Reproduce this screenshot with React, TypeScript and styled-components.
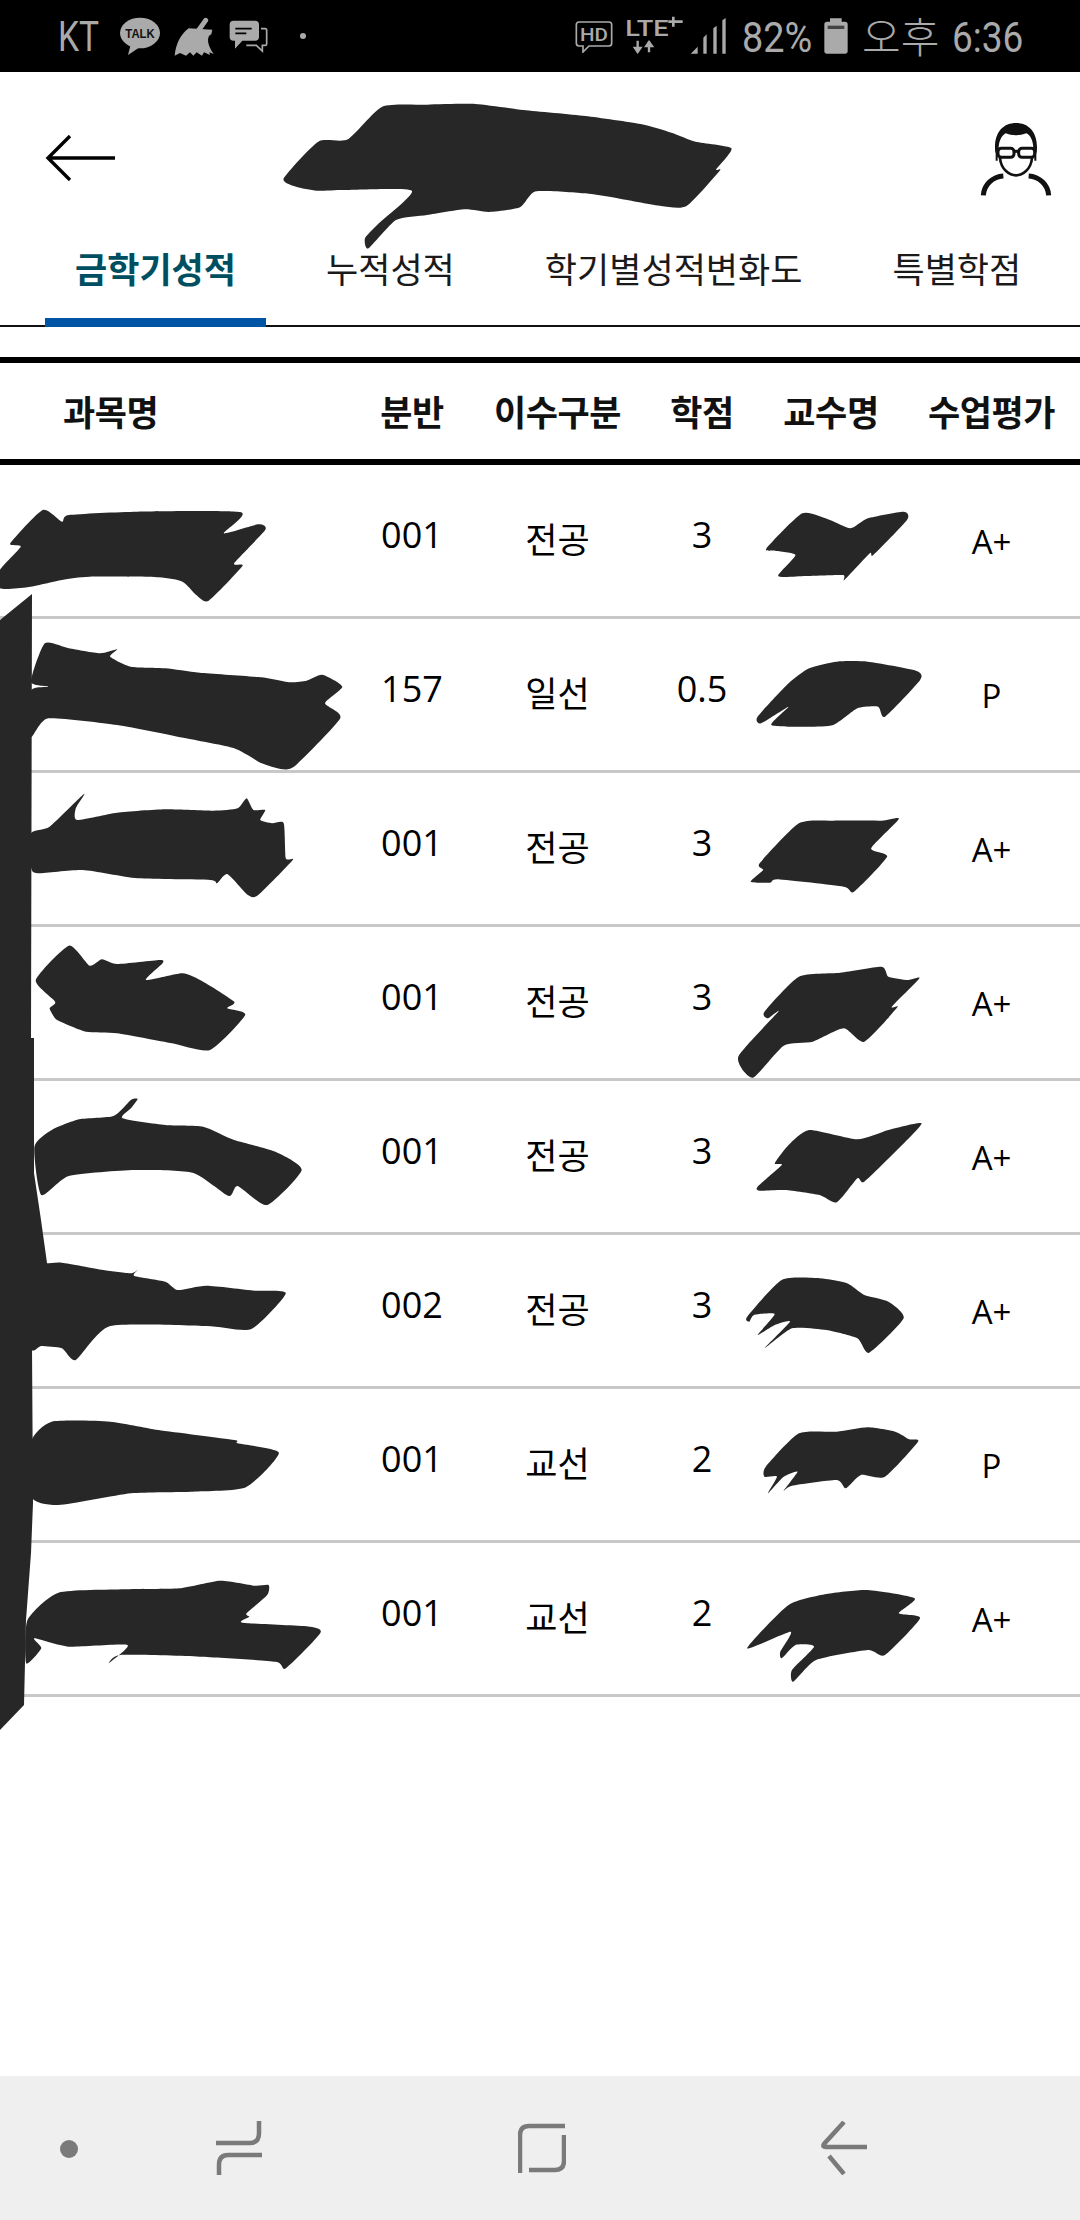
import React from "react";
import styled, { createGlobalStyle } from "styled-components";

const Global = createGlobalStyle`
  html, body { margin: 0; padding: 0; background: #fff; }
  body { font-family: "Open Sans", "Noto Sans CJK KR", sans-serif; }
`;

const Page = styled.div`
  position: relative;
  width: 1080px;
  height: 2220px;
  display: flex;
  flex-direction: column;
  overflow: hidden;
  background: #fff;
`;

const StatusBar = styled.div`
  height: 72px;
  flex: none;
  background: #000;
  display: flex;
  align-items: center;
  padding: 0 55px 0 58px;
  color: #aaa;
`;
const StatusGroup = styled.div<{ $right?: boolean }>`
  display: flex;
  align-items: center;
  margin-left: ${(p) => (p.$right ? "auto" : "0")};
`;
const StatusSlot = styled.div<{ $w: number; $ml?: number }>`
  width: ${(p) => p.$w}px;
  margin-left: ${(p) => p.$ml ?? 0}px;
  flex: none;
  display: flex;
  align-items: center;
  height: 72px;
  overflow: visible;
  & > svg { display: block; flex: none; }
`;
const StatusText = styled.span<{ $sx: number; $size: number; $dy?: number }>`
  display: inline-block;
  white-space: nowrap;
  font-family: Roboto, "Noto Sans CJK KR", sans-serif;
  font-weight: 400;
  font-size: ${(p) => p.$size}px;
  line-height: 72px;
  transform-origin: left center;
  transform: translateY(${(p) => p.$dy ?? 0}px) scaleX(${(p) => p.$sx});
`;
const StatusKo = styled(StatusText)`
  font-family: "Noto Sans CJK KR", sans-serif;
  font-weight: 300;
`;

const TitleBar = styled.div`
  height: 146px;
  flex: none;
  display: flex;
  align-items: flex-start;
  justify-content: space-between;
  padding: 50px 28px 0 45px;
  box-sizing: border-box;
`;
const BackSlot = styled.div`
  padding-top: 13px;
`;

const TabBar = styled.div`
  height: 109px;
  flex: none;
  box-sizing: border-box;
  display: flex;
  padding-left: 45px;
  gap: 30px;
  border-bottom: 2px solid #111;
`;
const Tab = styled.div<{ $active?: boolean }>`
  position: relative;
  padding: 0 30px;
  height: 107px;
  line-height: 99px;
  box-sizing: border-box;
  white-space: nowrap;
  font-family: "Noto Sans CJK KR", sans-serif;
  font-size: 35px;
  font-weight: ${(p) => (p.$active ? 700 : 400)};
  color: ${(p) => (p.$active ? "#004f60" : "#1a1a1a")};
  &::after {
    content: "";
    display: ${(p) => (p.$active ? "block" : "none")};
    position: absolute;
    left: 0;
    right: 0;
    bottom: -2px;
    height: 9px;
    background: #0054a6;
  }
`;

const Table = styled.div`
  margin-top: 30px;
  flex: none;
`;
const cols = "352px 120px 171px 118px 140px 181px";
const HeadRow = styled.div`
  display: grid;
  grid-template-columns: ${cols};
  height: 108px;
  box-sizing: border-box;
  border-top: 6px solid #000;
  border-bottom: 6px solid #000;
  align-items: center;
`;
const HeadCell = styled.div<{ $first?: boolean }>`
  font-family: "Noto Sans CJK KR", sans-serif;
  font-weight: 700;
  font-size: 35px;
  letter-spacing: -0.4px;
  color: #111;
  white-space: nowrap;
  text-align: ${(p) => (p.$first ? "left" : "center")};
  padding-left: ${(p) => (p.$first ? "63px" : "0")};
  padding-bottom: 2px;
`;
const BodyRow = styled.div`
  display: grid;
  grid-template-columns: ${cols};
  height: 154px;
  box-sizing: border-box;
  border-bottom: 3px solid #c8c8c8;
  align-items: center;
`;
const Cell = styled.div<{ $up?: number; $down?: number }>`
  font-family: "Open Sans", "Noto Sans CJK KR", sans-serif;
  font-size: 36px;
  color: #000;
  text-align: center;
  white-space: nowrap;
  padding-bottom: ${(p) => p.$up ?? 0}px;
  padding-top: ${(p) => p.$down ?? 0}px;
`;
const KoCell = styled(Cell)`
  font-family: "Noto Sans CJK KR", sans-serif;
  font-size: 35px;
`;
const GradeCell = styled(Cell)`
  font-size: 33px;
`;

const Spacer = styled.div`
  flex: 1;
`;

const NavBar = styled.div`
  height: 144px;
  flex: none;
  background: #efefef;
  display: flex;
  align-items: center;
  padding-left: 60px;
`;
const NavDot = styled.div`
  width: 18px;
  height: 18px;
  border-radius: 50%;
  background: #7a7a7a;
  margin-top: 2px;
`;
const NavIcon = styled.svg<{ $ml: number }>`
  display: block;
  margin-left: ${(p) => p.$ml}px;
  fill: none;
  stroke: #7a7a7a;
  stroke-width: 4.5;
`;

const Redactions = styled.svg`
  position: absolute;
  left: 0;
  top: 0;
  pointer-events: none;
`;

type P = number[];
const sx = 1.452;
const toPath = (base: number, pts: P[]) => {
  const q = pts.map(([x, y]) => [x / sx, base + y / 3]);
  const n = q.length;
  const t = 0.1;
  let d = `M${q[0][0].toFixed(1)} ${q[0][1].toFixed(1)}`;
  for (let i = 0; i < n; i++) {
    const p0 = q[(i - 1 + n) % n];
    const p1 = q[i];
    const p2 = q[(i + 1) % n];
    const p3 = q[(i + 2) % n];
    const c1x = p1[0] + (p2[0] - p0[0]) * t;
    const c1y = p1[1] + (p2[1] - p0[1]) * t;
    const c2x = p2[0] - (p3[0] - p1[0]) * t;
    const c2y = p2[1] - (p3[1] - p1[1]) * t;
    d += `C${c1x.toFixed(1)} ${c1y.toFixed(1)} ${c2x.toFixed(1)} ${c2y.toFixed(1)} ${p2[0].toFixed(1)} ${p2[1].toFixed(1)}`;
  }
  return d + "Z";
};

const marks: [number, P[]][] = [
  [0, [[555,320],[620,314],[690,312],[760,330],[850,348],[930,372],[975,398],[1010,425],[1062,445],[1040,508],[1045,512],[997,618],[960,618],[900,596],[850,580],[778,574],[755,622],[710,636],[675,628],[620,645],[575,660],[535,745],[530,715],[550,670],[598,572],[500,570],[460,572],[430,560],[412,535],[462,425],[505,418]]],
  [340, [[0,690],[30,620],[15,610],[62,510],[90,545],[100,525],[200,515],[350,517],[325,580],[375,553],[385,570],[340,670],[352,678],[303,782],[285,765],[265,725],[230,712],[130,710],[90,720],[40,742],[0,745]]],
  [340, [[1165,520],[1205,540],[1235,565],[1260,535],[1312,515],[1317,540],[1268,645],[1263,640],[1226,720],[1224,705],[1170,708],[1130,708],[1155,645],[1125,632],[1113,625]]],
  [340, [[65,910],[100,925],[145,940],[170,928],[160,950],[190,980],[240,985],[290,998],[380,1012],[420,1027],[445,1022],[468,1004],[497,1040],[472,1090],[494,1135],[430,1275],[410,1288],[380,1270],[340,1225],[270,1195],[170,1155],[70,1135],[45,1190],[45,1052],[70,1040],[45,1025]]],
  [340, [[1175,985],[1215,965],[1260,965],[1330,992],[1336,1020],[1285,1130],[1275,1100],[1245,1105],[1210,1155],[1170,1160],[1120,1155],[1145,1100],[1105,1150],[1100,1130],[1145,1030]]],
  [780, [[122,42],[110,85],[112,120],[170,98],[240,88],[310,92],[345,85],[358,55],[368,90],[385,90],[378,120],[395,130],[412,130],[415,235],[425,240],[375,345],[360,345],[330,282],[315,310],[305,300],[200,295],[120,270],[55,280],[45,262],[45,160],[72,140]]],
  [780, [[1160,130],[1210,122],[1280,122],[1305,117],[1265,205],[1288,230],[1240,335],[1225,320],[1130,298],[1118,308],[1090,305],[1108,270],[1103,250]]],
  [780, [[100,497],[130,557],[148,538],[170,552],[232,540],[236,550],[212,600],[265,580],[295,605],[340,665],[330,685],[356,705],[305,810],[250,790],[170,760],[125,755],[88,725],[80,715],[72,685],[80,665],[52,600]]],
  [780, [[1160,590],[1220,578],[1280,560],[1290,590],[1318,600],[1335,595],[1295,680],[1303,682],[1255,785],[1225,745],[1180,785],[1138,797],[1093,893],[1072,830],[1130,695],[1115,715],[1110,695]]],
  [780, [[200,957],[190,985],[178,1015],[240,1035],[295,1040],[340,1080],[400,1115],[438,1170],[388,1275],[345,1218],[332,1248],[280,1178],[195,1170],[100,1188],[60,1245],[50,1100],[75,1050],[115,1018],[165,1008],[190,960]]],
  [780, [[1175,1050],[1245,1078],[1290,1050],[1338,1030],[1305,1105],[1255,1205],[1245,1195],[1215,1267],[1190,1245],[1140,1230],[1103,1232],[1100,1220],[1135,1155],[1125,1150],[1145,1095]]],
  [1220, [[68,130],[90,128],[150,150],[190,160],[200,150],[195,168],[240,185],[258,210],[300,197],[370,212],[415,220],[365,327],[300,318],[160,318],[110,420],[90,385],[60,378],[45,382],[45,130]]],
  [1220, [[1135,180],[1190,175],[1230,190],[1255,225],[1290,245],[1312,295],[1262,398],[1245,355],[1200,330],[1150,325],[1110,385],[1147,305],[1125,315],[1100,345],[1125,282],[1095,285],[1088,305],[1085,290]]],
  [1220, [[75,605],[160,605],[230,630],[340,660],[345,670],[405,698],[357,802],[280,815],[190,820],[85,855],[45,830],[45,665]]],
  [1220, [[1160,640],[1215,635],[1260,622],[1300,635],[1320,658],[1333,665],[1285,770],[1250,765],[1228,805],[1215,780],[1150,797],[1138,812],[1158,755],[1138,770],[1115,820],[1128,770],[1110,770],[1112,740]]],
  [1220, [[85,1118],[180,1108],[260,1105],[320,1082],[370,1097],[390,1095],[388,1125],[358,1180],[362,1190],[352,1208],[450,1220],[465,1240],[415,1345],[400,1325],[290,1310],[175,1305],[158,1330],[185,1275],[100,1280],[50,1255],[60,1285],[38,1330],[40,1200]]],
  [1220, [[1145,1155],[1200,1122],[1260,1110],[1328,1135],[1305,1180],[1336,1195],[1285,1305],[1260,1290],[1185,1320],[1152,1385],[1150,1350],[1182,1280],[1155,1275],[1135,1315],[1133,1295],[1148,1235],[1085,1285]]],
];
const sideBar = "32,594 31,1038 34,1038 34,1173 41,1220 47,1263 32,1347 33,1503 31,1553 26,1620 24,1705 0,1730 0,620";

const rows = [
  ["001", "전공", "3", "A+"],
  ["157", "일선", "0.5", "P"],
  ["001", "전공", "3", "A+"],
  ["001", "전공", "3", "A+"],
  ["001", "전공", "3", "A+"],
  ["002", "전공", "3", "A+"],
  ["001", "교선", "2", "P"],
  ["001", "교선", "2", "A+"],
];

const gray = "#aaa";

const Talk = () => (
  <svg width="40" height="38" viewBox="360 52 120 114">
    <ellipse cx="420" cy="100" rx="60" ry="46" fill={gray} />
    <path d="M392 135 L384 166 L420 142 Z" fill={gray} />
    <text x="420" y="115" textAnchor="middle" fontFamily="Liberation Sans, sans-serif" fontWeight="700" fontSize="36" fill="#111" textLength="88" lengthAdjust="spacingAndGlyphs">TALK</text>
  </svg>
);
const Broom = () => (
  <svg width="40" height="39" viewBox="522 54 120 117">
    <path d="M617 64 L595 95" stroke={gray} strokeWidth="15" strokeLinecap="round" />
    <path d="M566 88 L637 92 L634 106 C618 112 622 140 641 165 L628 160 L630 168 L612 160 L606 170 L590 160 L580 170 L570 160 L558 170 L540 162 L524 170 C528 135 540 108 566 88 Z" fill={gray} />
  </svg>
);
const Chat = () => (
  <svg width="39" height="33" viewBox="686 62 117 99">
    <path d="M700 64 H764 Q776 64 776 76 V112 Q776 124 764 124 H726 L704 148 V124 H700 Q688 124 688 112 V76 Q688 64 700 64 Z" fill={gray} />
    <path d="M705 88 H754 M705 102 H738" stroke="#000" strokeWidth="5" />
    <path d="M782 88 H794 Q799 88 799 93 V133 Q799 138 794 138 H786 V155 L768 138 H738" stroke={gray} strokeWidth="5" fill="none" />
  </svg>
);
const HdIcon = () => (
  <svg width="38" height="33" viewBox="46 64 114 99">
    <path d="M58 70 H148 Q156 70 156 78 V134 Q156 142 148 142 H88 L70 160 V142 H58 Q50 142 50 134 V78 Q50 70 58 70 Z" fill="none" stroke={gray} strokeWidth="5" />
    <text x="103" y="126" textAnchor="middle" fontFamily="Roboto, sans-serif" fontWeight="500" fontSize="56" fill={gray} textLength="84" lengthAdjust="spacingAndGlyphs">HD</text>
  </svg>
);
const LteIcon = () => (
  <svg width="60" height="40" viewBox="195 56 180 120">
    <text x="196" y="116" fontFamily="Roboto, sans-serif" fontWeight="500" fontSize="66" fill={gray} textLength="130" lengthAdjust="spacingAndGlyphs">LTE</text>
    <path d="M340 58 V88 M325 73 H368" stroke={gray} strokeWidth="8" />
    <path d="M233 130 V165 M267 165 V132" stroke={gray} strokeWidth="7" />
    <path d="M218 148 H248 L233 170 Z M252 150 L267 128 L283 150 Z" fill={gray} />
  </svg>
);
const SignalIcon = () => (
  <svg width="37" height="37" viewBox="390 53 111 111">
    <path d="M392 160 L413 139 V160 Z M430 112 L440 102 V160 H430 Z M460 84 L470 76 V160 H460 Z M487 60 L497 53 V160 H487 Z" fill={gray} />
  </svg>
);
const BatteryIcon = () => (
  <svg width="24" height="36" viewBox="792 57 72 108">
    <path d="M810 58 H845 V68 H855 Q863 68 863 76 V156 Q863 164 855 164 H801 Q793 164 793 156 V76 Q793 68 801 68 H810 Z" fill={gray} />
    <rect x="803" y="80" width="50" height="10" fill="#444" />
  </svg>
);
const StatusDot = () => (
  <svg width="8" height="8" viewBox="0 0 8 8"><circle cx="4" cy="4" r="3" fill={gray} /></svg>
);

const BackArrow = () => (
  <svg width="70" height="46" viewBox="0 0 70 46">
    <path d="M70 23 H3 M25 1 L3 23 L25 45" fill="none" stroke="#000" strokeWidth="3.4" />
  </svg>
);
const Person = () => (
  <svg width="72" height="74" viewBox="88 62 214 222">
    <path d="M133 155 C126 95 155 65 195 65 C235 65 264 95 257 155 L247 142 C247 120 238 100 226 96 C206 104 182 104 164 96 C152 102 143 120 143 142 Z" fill="#111" />
    <path d="M147 170 C150 205 176 222 195 222 C214 222 240 205 243 170" fill="none" stroke="#111" strokeWidth="8" />
    <rect x="141" y="141" width="48" height="27" rx="10" fill="none" stroke="#111" strokeWidth="9" />
    <rect x="203" y="141" width="48" height="27" rx="10" fill="none" stroke="#111" strokeWidth="9" />
    <path d="M186 150 H206" stroke="#111" strokeWidth="9" />
    <path d="M137 150 V178 M253 150 V178" stroke="#111" strokeWidth="6" />
    <path d="M97 282 C99 250 125 226 157 224 M293 282 C291 250 265 226 233 224" fill="none" stroke="#111" strokeWidth="15" />
  </svg>
);

export default function App() {
  return (
    <Page>
      <Global />
      <StatusBar>
        <StatusGroup>
          <StatusSlot $w={40}><StatusText $sx={0.8} $size={42} $dy={1}>KT</StatusText></StatusSlot>
          <StatusSlot $w={40} $ml={22}><Talk /></StatusSlot>
          <StatusSlot $w={40} $ml={14}><Broom /></StatusSlot>
          <StatusSlot $w={39} $ml={15}><Chat /></StatusSlot>
          <StatusSlot $w={8} $ml={31}><StatusDot /></StatusSlot>
        </StatusGroup>
        <StatusGroup $right>
          <StatusSlot $w={38}><HdIcon /></StatusSlot>
          <StatusSlot $w={60} $ml={12}><LteIcon /></StatusSlot>
          <StatusSlot $w={37} $ml={5}><SignalIcon /></StatusSlot>
          <StatusSlot $w={68} $ml={15}><StatusText $sx={0.88} $size={43} $dy={1}>82%</StatusText></StatusSlot>
          <StatusSlot $w={24} $ml={14}><BatteryIcon /></StatusSlot>
          <StatusSlot $w={76} $ml={14}><StatusKo $sx={1} $size={42} $dy={-1}>오후</StatusKo></StatusSlot>
          <StatusSlot $w={73} $ml={14}><StatusText $sx={0.86} $size={43} $dy={1}>6:36</StatusText></StatusSlot>
        </StatusGroup>
      </StatusBar>
      <TitleBar>
        <BackSlot><BackArrow /></BackSlot>
        <Person />
      </TitleBar>
      <TabBar>
        <Tab $active>금학기성적</Tab>
        <Tab>누적성적</Tab>
        <Tab>학기별성적변화도</Tab>
        <Tab>특별학점</Tab>
      </TabBar>
      <Table>
        <HeadRow>
          <HeadCell $first>과목명</HeadCell>
          <HeadCell>분반</HeadCell>
          <HeadCell>이수구분</HeadCell>
          <HeadCell>학점</HeadCell>
          <HeadCell>교수명</HeadCell>
          <HeadCell>수업평가</HeadCell>
        </HeadRow>
        {rows.map((r, i) => (
          <BodyRow key={i}>
            <div />
            <Cell $up={12}>{r[0]}</Cell>
            <KoCell $up={6}>{r[1]}</KoCell>
            <Cell $up={12}>{r[2]}</Cell>
            <div />
            <GradeCell $down={2}>{r[3]}</GradeCell>
          </BodyRow>
        ))}
      </Table>
      <Spacer />
      <NavBar>
        <NavDot />
        <NavIcon $ml={138} width="46" height="54" viewBox="0 0 46 54">
          <path d="M0 22 H34 Q43 22 43 12 V0 M46 34 H12 Q3 34 3 44 V54" />
        </NavIcon>
        <NavIcon $ml={256} width="48" height="50" viewBox="0 0 48 50">
          <path d="M47 3 H11 Q2 3 2 12 V50 M11 47 H37 Q46 47 46 38 V12" />
        </NavIcon>
        <NavIcon $ml={255} width="46" height="54" viewBox="0 0 46 54">
          <path d="M23 1 L3 23 Q1 26 5 26 H46 M8 35 L23 53" />
        </NavIcon>
      </NavBar>
      <Redactions width="1080" height="2220" viewBox="0 0 1080 2220">
        {marks.map(([b, pts], i) => (
          <path key={i} d={toPath(b, pts)} fill="#272727" />
        ))}
        <polygon points={sideBar} fill="#272727" />
      </Redactions>
    </Page>
  );
}
